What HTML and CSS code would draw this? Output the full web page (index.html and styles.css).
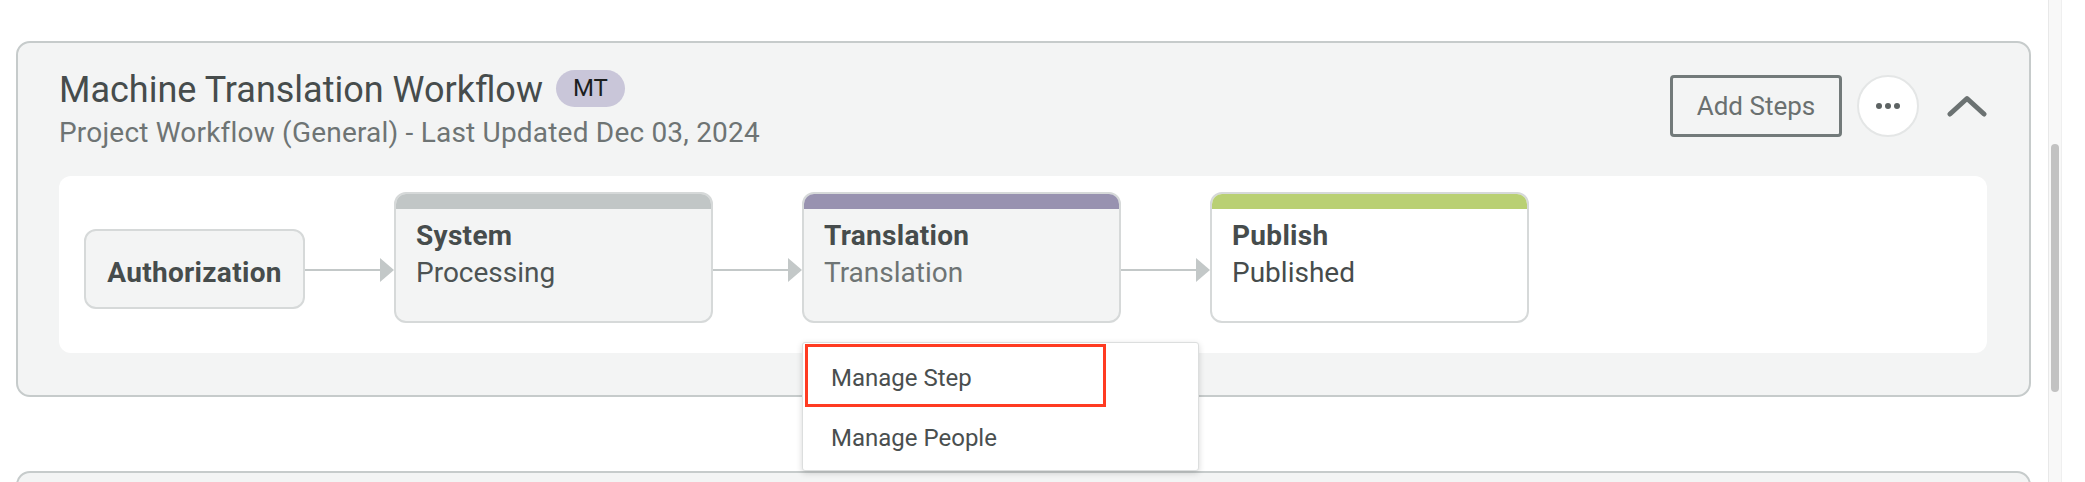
FILE: index.html
```html
<!DOCTYPE html>
<html lang="en">
<head>
<meta charset="utf-8">
<title>Machine Translation Workflow</title>
<link rel="stylesheet" href="styles.css">
</head>
<body>
<div class="page">
  <main class="main">
    <section class="card">
      <header class="card-head">
        <div class="head-text">
          <div class="title-row">
            <h1 class="title">Machine Translation Workflow</h1>
            <span class="badge">MT</span>
          </div>
          <p class="subtitle">Project Workflow (General) - Last Updated Dec 03, 2024</p>
        </div>
        <div class="actions">
          <button class="btn-outline" type="button">Add Steps</button>
          <button class="btn-more" type="button" aria-label="More">
            <span class="dot"></span><span class="dot"></span><span class="dot"></span>
          </button>
          <button class="btn-collapse" type="button" aria-label="Collapse">
            <svg width="40" height="22" viewBox="0 0 40 22"><polyline points="3,19 20,3.5 37,19" fill="none" stroke="#6b7272" stroke-width="5" stroke-linecap="round" stroke-linejoin="round"/></svg>
          </button>
        </div>
      </header>
      <div class="flow">
        <div class="node node-simple"><span class="node-title">Authorization</span></div>
        <div class="connector">
          <svg width="89" height="24" viewBox="0 0 89 24"><line x1="0" y1="12" x2="76" y2="12" stroke="#c3c8c8" stroke-width="2"/><polygon points="75,0 89,12 75,24" fill="#c3c8c8"/></svg>
        </div>
        <div class="node node-step">
          <div class="bar bar-gray"></div>
          <div class="node-body">
            <div class="node-title">System</div>
            <div class="node-sub">Processing</div>
          </div>
        </div>
        <div class="connector">
          <svg width="89" height="24" viewBox="0 0 89 24"><line x1="0" y1="12" x2="76" y2="12" stroke="#c3c8c8" stroke-width="2"/><polygon points="75,0 89,12 75,24" fill="#c3c8c8"/></svg>
        </div>
        <div class="node node-step has-menu">
          <div class="bar bar-purple"></div>
          <div class="node-body">
            <div class="node-title">Translation</div>
            <div class="node-sub node-sub-light">Translation</div>
          </div>
          <div class="menu">
            <div class="menu-item menu-item-marked">Manage Step</div>
            <div class="menu-item">Manage People</div>
          </div>
        </div>
        <div class="connector">
          <svg width="89" height="24" viewBox="0 0 89 24"><line x1="0" y1="12" x2="76" y2="12" stroke="#c3c8c8" stroke-width="2"/><polygon points="75,0 89,12 75,24" fill="#c3c8c8"/></svg>
        </div>
        <div class="node node-step node-white">
          <div class="bar bar-green"></div>
          <div class="node-body">
            <div class="node-title">Publish</div>
            <div class="node-sub node-sub-dark">Published</div>
          </div>
        </div>
      </div>
    </section>
    <section class="card card-next"></section>
  </main>
  <div class="scrollbar"><div class="thumb"></div></div>
  <div class="edge"></div>
</div>
</body>
</html>
```
FILE: styles.css
```css
* { box-sizing: border-box; }
html, body { margin: 0; padding: 0; }
body {
  background: #ffffff;
  font-family: Roboto, "Liberation Sans", Arial, sans-serif;
  color: #464c4c;
  height: 482px;
  overflow: hidden;
}
.page { display: flex; height: 482px; overflow: hidden; }
.main {
  width: 2048px;
  height: 482px;
  overflow: hidden;
  padding: 41px 17px 0 16px;
}
.card {
  background: #f3f4f4;
  border: 2px solid #c6cbcb;
  border-radius: 14px;
  padding: 25px 42px 42px 41px;
}
.card-next { margin-top: 74px; height: 30px; padding: 0; }
.card-head { display: flex; justify-content: space-between; align-items: flex-start; }
.title-row { display: flex; align-items: center; gap: 13px; height: 44px; }
.title {
  margin: 0;
  font-size: 36px;
  line-height: 44px;
  font-weight: 400;
  color: #464c4c;
}
.badge {
  display: inline-flex;
  align-items: center;
  justify-content: center;
  width: 69px;
  height: 37px;
  margin-top: -4px;
  border-radius: 19px;
  background: #c9c6d9;
  color: #1c1e1e;
  font-size: 24px;
}
.subtitle {
  margin: 4px 0 0;
  font-size: 28px;
  letter-spacing: 0.2px;
  line-height: 34px;
  color: #6e7474;
}
.actions { display: flex; align-items: center; margin-top: 7px; }
.btn-outline {
  height: 62px;
  width: 172px;
  border: 3px solid #727a7a;
  border-radius: 4px;
  background: transparent;
  font-family: inherit;
  font-size: 26px;
  color: #6a7070;
  padding: 0;
}
.btn-more {
  width: 62px;
  height: 62px;
  margin-left: 15px;
  border-radius: 50%;
  border: 2px solid #e4e6e6;
  background: #ffffff;
  display: flex;
  align-items: center;
  justify-content: center;
  gap: 3px;
  padding: 0;
}
.dot { width: 6px; height: 6px; border-radius: 50%; background: #5d6363; }
.btn-collapse {
  border: 0;
  background: transparent;
  padding: 0;
  margin-left: 28px;
  display: flex;
}
.flow {
  margin-top: 26px;
  background: #ffffff;
  border-radius: 12px;
  padding: 16px 25px 30px;
  display: flex;
  align-items: flex-start;
}
.node {
  background: #f3f4f4;
  border: 2px solid #d6d9d9;
  border-radius: 12px;
}
.node-simple {
  width: 221px;
  height: 80px;
  margin-top: 37px;
  display: flex;
  align-items: center;
  justify-content: center;
  padding-top: 6px;
}
.node-title { font-weight: 700; font-size: 28px; letter-spacing: 0.3px; line-height: 37px; color: #464c4c; }
.node-sub { font-size: 28px; line-height: 37px; color: #4d5353; }
.node-sub-light { color: #6e7474; }
.node-sub-dark { color: #464c4c; }
.node-step {
  width: 319px;
  height: 131px;
  position: relative;
}
.node-white { background: #ffffff; }
.bar { height: 15px; border-radius: 10px 10px 0 0; }
.bar-gray { background: #c1c6c6; }
.bar-purple { background: #9892b0; }
.bar-green { background: #b9d073; }
.node-body { padding: 8px 20px 0; }
.connector { width: 89px; margin-top: 66px; display: flex; }
.menu {
  position: absolute;
  left: -2px;
  top: 148px;
  width: 397px;
  height: 129px;
  background: #ffffff;
  border: 1px solid #dcdede;
  border-radius: 3px;
  box-shadow: 0 2px 6px rgba(0, 0, 0, 0.16);
  padding: 1px 2px;
  z-index: 5;
}
.menu-item {
  height: 60px;
  display: flex;
  align-items: center;
  padding-left: 26px;
  padding-top: 2px;
  font-size: 24px;
  color: #4a4f4f;
}
.menu-item-marked {
  width: 301px;
  height: 63px;
  border: 3px solid #ff3b22;
  padding-left: 23px;
  padding-top: 4px;
}
.scrollbar {
  width: 14px;
  background: #f8f8f8;
  border-left: 1px solid #e8e8e8;
  border-right: 1px solid #efefef;
  padding-top: 144px;
}
.thumb {
  width: 8px;
  height: 248px;
  margin-left: 2px;
  border-radius: 4px;
  background: #c2c2c2;
}
.edge { flex: 1; background: #ffffff; }
```
